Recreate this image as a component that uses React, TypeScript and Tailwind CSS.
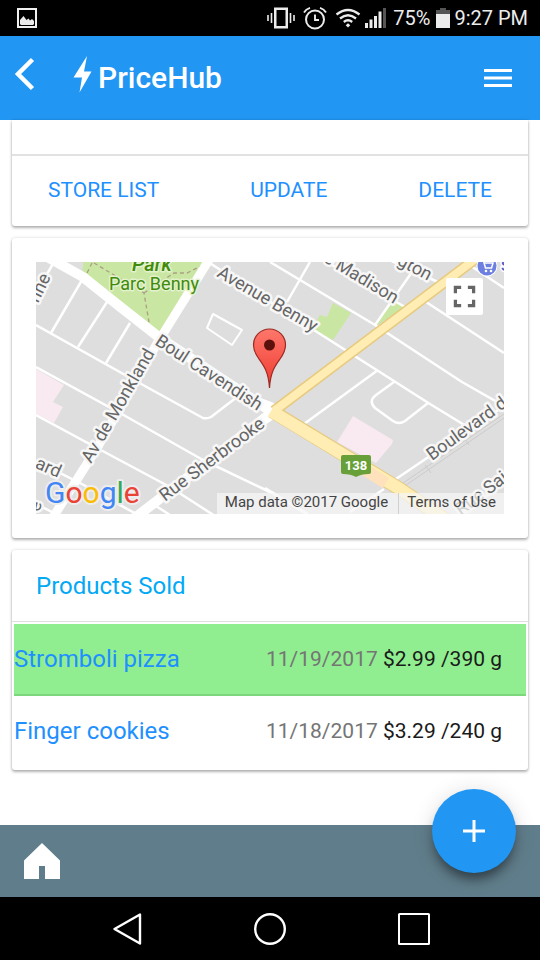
import type { ReactNode } from "react";

const products = [
  { name: "Stromboli pizza", date: "11/19/2017", price: "$2.99 /390 g", best: true },
  { name: "Finger cookies", date: "11/18/2017", price: "$3.29 /240 g", best: false },
];

const streetLabels = [
  { text: "Avenue Benny", x: 216, y: 276, angle: 30, anchor: "start" },
  { text: "Boul Cavendish", x: 154, y: 344, angle: 33, anchor: "start" },
  { text: "Av de Monkland", x: 91, y: 464, angle: -60, anchor: "start" },
  { text: "Rue Sherbrooke", x: 165, y: 502, angle: -37, anchor: "start" },
  { text: "Boulevard d", x: 432, y: 461, angle: -36, anchor: "start" },
  { text: "e Madison", x: 394, y: 304, angle: 31, anchor: "end" },
  { text: "gton", x: 428, y: 281, angle: 28, anchor: "end" },
  { text: "ard", x: 58, y: 478, angle: 24, anchor: "end" },
  { text: "nne", x: 51, y: 277, angle: -64, anchor: "end" },
  { text: "e", x: 42, y: 503, angle: -75, anchor: "end" },
  { text: "Rue Sai", x: 461, y: 516, angle: -37, anchor: "start" },
] as const;

function StatusBar() {
  return (
    <div className="flex h-9 items-center bg-black pr-3 pl-4 text-[20px] leading-6 text-[#ececec]">
      <svg width="22" height="22" viewBox="0 0 22 22" aria-hidden="true">
        <rect x="2" y="2" width="18" height="18" fill="none" stroke="#f0f0f0" strokeWidth="2" />
        <path d="M4 17V13L7.500 9 10.500 13 12.500 11.500 14 13.500 16 12 18 14V17L17 18H5Z" fill="#ececec" />
      </svg>
      <div className="ml-auto flex items-center">
        <svg width="28" height="24" viewBox="0 0 28 24" fill="none" stroke="#ececec" aria-hidden="true">
          <rect x="8.250" y="2.750" width="11.500" height="18.500" strokeWidth="2.500" />
          <path d="M4.500 7v10M23.500 7v10" strokeWidth="1.600" />
          <path d="M1 9v6M27 9v6" strokeWidth="1.600" />
        </svg>
        <svg className="ml-2" width="24" height="24" viewBox="0 0 24 24" fill="none" stroke="#ececec" aria-hidden="true">
          <circle cx="12" cy="13.500" r="9" strokeWidth="2" />
          <path d="M12 8.500V14H16M1 6.500Q3 3 7 1.800M23 6.500Q21 3 17 1.800" strokeWidth="1.900" />
        </svg>
        <svg className="ml-2" width="26" height="24" viewBox="0 0 26 24" fill="none" stroke="#ececec" strokeWidth="2.300" aria-hidden="true">
          <path d="M1.500 8.500Q13 -.5 24.500 8.500M5 12.500Q13 6 21 12.500M8.800 16Q13 12.500 17.200 16" />
          <path d="M13 17.200 15.300 19.200 13 21.500 10.700 19.200Z" fill="#ececec" stroke="none" />
        </svg>
        <svg className="ml-1" width="22" height="24" viewBox="0 0 22 24" fill="#ececec" aria-hidden="true">
          <path d="M0 17h3v5H0zM4.500 13.500h3V22h-3zM9 10h3v12H9zM13.500 5.500h3V22h-3z" />
          <path d="M18 2h3v20h-3z" fill="#555" />
        </svg>
        <span className="ml-1.5">75%</span>
        <svg className="ml-1.5" width="14" height="24" viewBox="0 0 14 24" aria-hidden="true">
          <path d="M4 2h6v2h4v4H0V4h4z" fill="#555" />
          <path d="M0 8h14v14H0z" fill="#ececec" />
        </svg>
        <span className="ml-1">9:27 PM</span>
      </div>
    </div>
  );
}

function AppBar() {
  return (
    <header className="flex h-21 items-center bg-[#2196f3] pr-7 pl-3 text-white">
      <button type="button" aria-label="Back" className="mb-2">
        <svg width="24" height="36" viewBox="0 0 24 36" fill="none" stroke="currentColor" strokeWidth="4.500">
          <path d="M20.500 3.500 6 18 20.500 32.500" />
        </svg>
      </button>
      <svg className="mb-2 ml-9" width="22" height="38" viewBox="0 0 22 38" fill="currentColor" aria-hidden="true">
        <path d="M15 1 1.500 22.500H10L7.500 37.500 19.500 16.500H12Z" />
      </svg>
      <h1 className="ml-1 text-[30px] leading-9 font-medium">PriceHub</h1>
      <button type="button" aria-label="Menu" className="ml-auto">
        <svg width="28" height="20" viewBox="0 0 28 20" fill="currentColor">
          <path d="M0 1h28v3H0zM0 8.500h28v3H0zM0 16h28v3H0z" />
        </svg>
      </button>
    </header>
  );
}

function Card({ children, className = "" }: { children: ReactNode; className?: string }) {
  return (
    <section className={"rounded-[3px] bg-white shadow-[0_2px_3px_rgba(0,0,0,0.28),0_0_3px_rgba(0,0,0,0.16)] " + className}>
      {children}
    </section>
  );
}

function StreetMap() {
  return (
    <div className="relative h-[252px] overflow-hidden bg-[#dedede]">
      <svg className="block h-full w-full" viewBox="36 262 468 252" preserveAspectRatio="xMidYMid slice" role="img" aria-label="Store location map">
        <g fill="#c9e6a2">
          <path d="M84 255H212L158 336 82 275Z" />
          <path d="M333 303 351 313 333 340 312 329 320 315 327 317Z" />
          <path d="M376 326 388 307 397 301 405 307Z" />
        </g>
        <g fill="#f8eaf0">
          <path d="M36 369 64 385 53 402 63 407 54 423 36 414Z" />
          <path d="M353 416 393 440 392 444 376 463 337 442Z" />
        </g>
        <path d="M92 263 87 273M94 263 144 293 150 328M144 293 174 273 187 273 203 265" fill="none" stroke="#ab9f86" strokeWidth="1.300" strokeDasharray="4 3" />
        <path d="M390 492 504 414M393 494 504 418M425 465l6 8M464 438l5 7" fill="none" stroke="#cbcbcb" strokeWidth="1" />
        <g fill="none" stroke="#fff" strokeWidth="2.500" strokeLinejoin="round">
          <path d="M82 280 51 333M107 302 78 347M130 323 106 363M54 262 36 293" />
          <path d="M36 325 143 385 203 418Q207 419 211 417L237 397" />
          <path d="M36 367 120 413 203 460 270 492 310 516" />
          <path d="M36 415 97 448 170 487 215 516" />
          <path d="M36 461 80 483 140 516M36 504 56 514M156 506 170 515" />
          <path d="M213 314 242 330 232 345 207 328Z" strokeWidth="2" />
          <path d="M205 260 317 332 430 404 466 426" />
          <path d="M270 262 375 325 462 382 504 406" />
          <path d="M320 258 405 307M423 300 504 353M385 258 440 283M468 264 504 288" />
          <path d="M310 262 287 302M412 272 375 325" />
          <path d="M378 370 304 424" />
          <path d="M394 382 376 395Q368 401 375 408L393 421Q399 425 405 421L428 403" />
          <path d="M504 406 393 481M384 489 350 512M265 488 308 514" />
          <path d="M460 516 504 483" />
        </g>
        <g fill="none" stroke="#fff" strokeLinejoin="round">
          <path d="M42 254 83 277 118 305 160 338 272 412" strokeWidth="10" />
          <path d="M212 255 158 342 97 448 50 522" strokeWidth="9" />
          <path d="M278 408 132 520" strokeWidth="10" />
          <path d="M259 401 272 406 272 416 263 422" strokeWidth="7" />
        </g>
        <g fill="none" strokeLinejoin="round">
          <path d="M482 254 274 411" stroke="#e7ca7d" strokeWidth="11" />
          <path d="M272 411 400 489 446 520" stroke="#e7ca7d" strokeWidth="14" />
          <path d="M482 254 274 411" stroke="#ffedb4" strokeWidth="8" />
          <path d="M271 411 400 489 446 520" stroke="#ffedb4" strokeWidth="12" />
          <path d="M357 465 386 483" stroke="#ffe2bb" strokeWidth="12" />
        </g>
        <g className="font-[Roboto,sans-serif] text-[18px]" fill="#666" stroke="#f7f7f7" strokeWidth="5" strokeLinejoin="round" paintOrder="stroke">
          {streetLabels.map((label) => (
            <text key={label.text} x={label.x} y={label.y} textAnchor={label.anchor} transform={`rotate(${label.angle} ${label.x} ${label.y})`}>
              {label.text}
            </text>
          ))}
        </g>
        <g className="font-[Roboto,sans-serif]" fill="#418a0c" stroke="#e3f2cd" strokeWidth="3" strokeLinejoin="round" paintOrder="stroke">
          <text className="text-[20px] font-medium italic" x="132" y="271">Park</text>
          <text className="text-[18px]" x="109" y="290">Parc Benny</text>
        </g>
        <circle cx="487" cy="266" r="10.500" fill="#fff" />
        <circle cx="487" cy="266" r="9.500" fill="#6d7fe0" />
        <path d="M481 261h2.500l2 7h6l1.500-5h-9" fill="none" stroke="#fff" strokeWidth="1.500" />
        <circle cx="486" cy="271" r="1.300" fill="#fff" />
        <circle cx="491" cy="271" r="1.300" fill="#fff" />
        <text className="font-[Roboto,sans-serif] text-[15px] font-medium" x="501" y="271" fill="#4a56c8" stroke="#fff" strokeWidth="3" paintOrder="stroke">S</text>
        <path d="M343 455h26q2 0 2 2v15q0 2-2 2-8 0-13 3-5-3-13-3-2 0-2-2v-15q0-2 2-2z" fill="#679f38" />
        <text className="font-[Roboto,sans-serif] text-[13px] font-bold" x="356" y="470" textAnchor="middle" fill="#fff">138</text>
        <defs>
          <linearGradient id="pin" x1="0" y1="0" x2="0" y2="1">
            <stop offset="0" stopColor="#ff776b" />
            <stop offset="1" stopColor="#ee3a2f" />
          </linearGradient>
        </defs>
        <path d="M269.500 388C268.500 372 264 366 259 359 255 353.500 253.500 350 253.500 345A16 16 0 0 1 285.500 345C285.500 350 284 353.500 280 359 275 366 270.500 372 269.500 388Z" fill="url(#pin)" stroke="#9c2a22" strokeWidth="1.200" />
        <circle cx="269.500" cy="345" r="5.500" fill="#5c110d" />
        <text className="font-[Roboto,sans-serif] text-[30px]" x="45" y="503" stroke="#ededed" strokeWidth="4" strokeLinejoin="round" paintOrder="stroke">
          <tspan fill="#4285f4">G</tspan>
          <tspan fill="#ea4335">o</tspan>
          <tspan fill="#fbbc05">o</tspan>
          <tspan fill="#4285f4">g</tspan>
          <tspan fill="#34a853">l</tspan>
          <tspan fill="#ea4335">e</tspan>
        </text>
      </svg>
      <button type="button" aria-label="Toggle fullscreen view" className="absolute top-4 right-[21px] flex h-[37px] w-[37px] items-center justify-center rounded-[2px] bg-white">
        <svg width="23" height="23" viewBox="0 0 24 24" fill="none" stroke="#666" strokeWidth="3.400">
          <path d="M2.500 8.500v-6h6M15.500 2.500h6v6M21.500 15.500v6h-6M8.500 21.500h-6v-6" />
        </svg>
      </button>
      <div className="absolute right-0 bottom-0 flex h-[21px] items-start bg-[#f5f5f5]/75 text-[15px] leading-[18px] text-[#444]">
        <span className="pr-2.5 pl-2">Map data ©2017 Google</span>
        <a href="#terms" className="h-full border-l border-[#d0d0d0] pr-2 pl-2">Terms of Use</a>
      </div>
    </div>
  );
}

function ProductsTable() {
  return (
    <div className="p-0.5">
      <table className="w-full border-collapse text-left">
        <tbody>
          {products.map((product) => (
            <tr key={product.name} className={product.best ? "bg-[#90ee90] shadow-[inset_0_-2px_0_#7cd77c]" : ""}>
              <th scope="row" className="h-18 p-0 pb-0.5 text-2xl font-normal">
                <a href="#product" className="text-[#1e90ff]">{product.name}</a>
              </th>
              <td className="p-0 pr-6 text-right text-[21px] text-[#1a1a1a]">
                <span className="text-[#757575]">{product.date}</span> {product.price}
              </td>
            </tr>
          ))}
        </tbody>
      </table>
    </div>
  );
}

function BottomBar() {
  return (
    <footer className="relative flex h-18 items-center bg-[#607d8b] px-6">
      <button type="button" aria-label="Home">
        <svg width="36" height="36" viewBox="0 0 36 36" fill="#fff">
          <path d="M18 0 36 17.500V36H21V23H15V36H0V17.500Z" />
        </svg>
      </button>
      <button type="button" aria-label="Add product" className="absolute -top-9 right-6 flex h-21 w-21 items-center justify-center rounded-full bg-[#2196f3] shadow-[0_9px_11px_-3px_rgba(0,0,0,0.45),0_3px_22px_rgba(0,0,0,0.14)]">
        <svg width="22" height="22" viewBox="0 0 22 22" fill="#fff">
          <path d="M9.500 0h3v9.500H22v3h-9.500V22h-3v-9.500H0v-3h9.500z" />
        </svg>
      </button>
    </footer>
  );
}

function SystemNav() {
  return (
    <nav aria-label="System" className="flex h-[63px] items-center justify-center gap-28 bg-black">
      <button type="button" aria-label="System back">
        <svg width="32" height="32" viewBox="0 0 32 32" fill="none" stroke="#fff" strokeWidth="2.400" strokeLinejoin="round">
          <path d="M30 1.500V30.500L4.500 16Z" />
        </svg>
      </button>
      <button type="button" aria-label="System home">
        <svg width="32" height="32" viewBox="0 0 32 32" fill="none" stroke="#fff" strokeWidth="2.400">
          <circle cx="16" cy="16" r="14.800" />
        </svg>
      </button>
      <button type="button" aria-label="Recent apps">
        <svg width="32" height="32" viewBox="0 0 32 32" fill="none" stroke="#fff" strokeWidth="2">
          <rect x="1" y="1" width="30" height="30" rx="0.500" />
        </svg>
      </button>
    </nav>
  );
}

export default function App() {
  return (
    <div className="flex min-h-screen flex-col bg-white font-[Roboto,sans-serif]">
      <StatusBar />
      <AppBar />
      <main className="flex flex-1 flex-col gap-3 px-3">
        <Card className="rounded-t-none pt-[34px]">
          <div className="flex h-18 items-center justify-between border-t-2 border-[#e2e2e2] px-9 pb-0.5 text-[21px] leading-6 text-[#1e90ff]">
            <button type="button">STORE LIST</button>
            <button type="button">UPDATE</button>
            <button type="button">DELETE</button>
          </div>
        </Card>
        <Card className="p-6">
          <StreetMap />
        </Card>
        <Card>
          <h2 className="flex h-18 items-center border-b border-[#e0e0e0] px-6 text-2xl text-[#03a9f4]">Products Sold</h2>
          <ProductsTable />
        </Card>
      </main>
      <BottomBar />
      <SystemNav />
    </div>
  );
}
